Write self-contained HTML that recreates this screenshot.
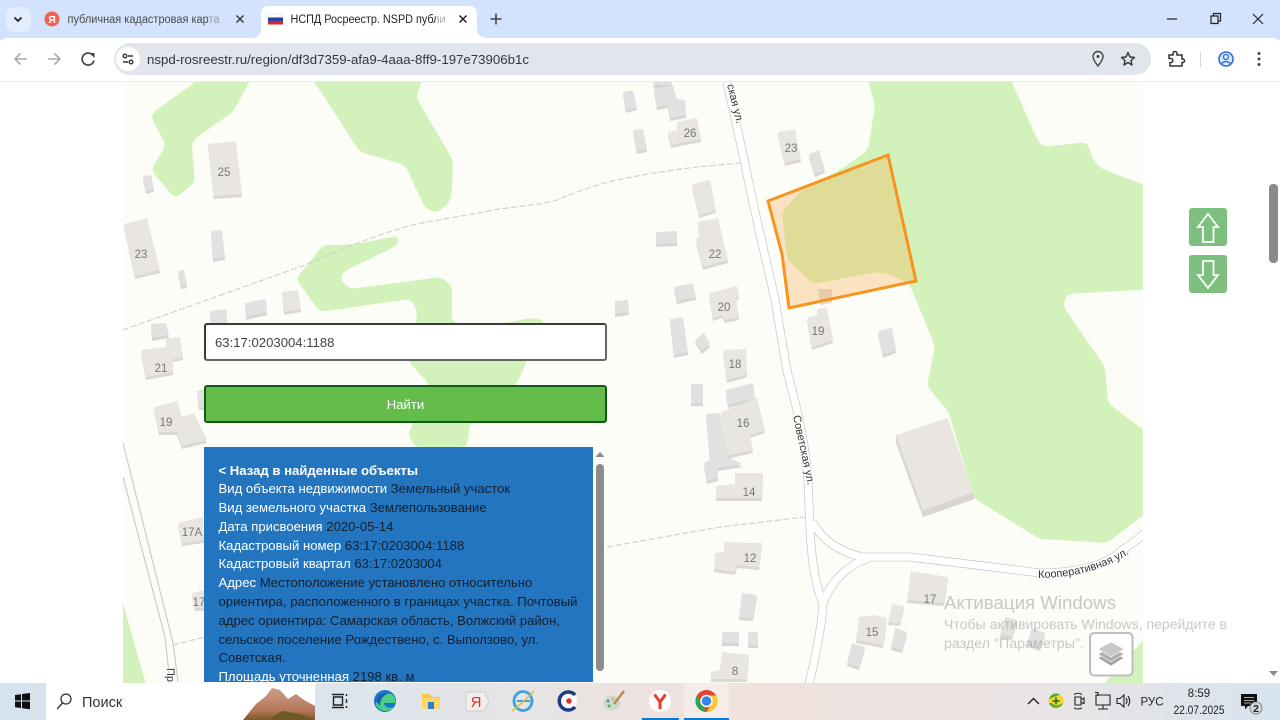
<!DOCTYPE html>
<html lang="ru"><head><meta charset="utf-8"><title>НСПД</title>
<style>
html,body{margin:0;padding:0;width:1280px;height:720px;overflow:hidden;background:#fff;font-family:"Liberation Sans","Noto Sans CJK SC",sans-serif}
svg{position:absolute;left:0;top:0}
.b{filter:drop-shadow(0 3px 0 #dbd8d2)}
.b polygon{fill:#e9e6e1}
.g{filter:drop-shadow(0 3px 0 #d6d6d3)}
.g polygon{fill:#e1e1e1}
.l{font-size:11.5px;fill:#777;text-anchor:middle}
.rd{fill:none;stroke:#c6c6c2;stroke-width:8.8;stroke-linejoin:round}
.rw{fill:none;stroke:#fff;stroke-width:7.4;stroke-linejoin:round}
.box{position:absolute;box-sizing:border-box}
#inp{left:204px;top:323px;width:403px;height:38px;background:#fff;border:2px solid #3a3a3a;border-bottom-color:#666;border-right-color:#666;border-radius:3px;font-size:13.13px;line-height:36px;padding-left:9px;color:#444}
#btn{left:204px;top:385px;width:403px;height:38px;background:#64bd4b;border:2px solid #0f5b14;border-radius:3px;font-size:13.13px;line-height:36px;color:#fff;text-align:center}
#pan{left:204px;top:447px;width:389px;height:235px;background:#2475c0;overflow:hidden;padding:14.5px 0 0 14.5px;font-size:13.13px;line-height:18.8px;color:#10202f;white-space:nowrap}
#pan span{color:#fff}
</style></head><body>
<svg width="1280" height="720" viewBox="0 0 1280 720" xmlns="http://www.w3.org/2000/svg">
<defs>
<clipPath id="mapc"><rect x="123" y="82" width="1020" height="601"/></clipPath>
<filter id="goo" filterUnits="userSpaceOnUse" x="0" y="0" width="1280" height="720" color-interpolation-filters="sRGB">
<feGaussianBlur stdDeviation="3.500"/><feComponentTransfer><feFuncA type="linear" slope="14" intercept="-6.500"/></feComponentTransfer>
</filter>
</defs>
<rect x="123" y="82" width="1020" height="601" fill="#fdfdf8"/>
<g clip-path="url(#mapc)">
<g fill="#d3f2bb" filter="url(#goo)">
<polygon points="262,60 233,112 193,140 192,149 195,182 175,199 151,170 166,145 150,115 195,82 205,60"/>
<polygon points="300,60 430,60 416,97 453,160 452,190 450,202 437,213 425,208 405,165 360,152"/>
<polygon points="400,235 398,245 343,272 340,280 350,289 440,277 452,285 452,323 503,323 532,318 546,320 516,385 470,423 467,447 415,447 408,435 413,423 430,385 407,360 416,324 417,309 410,299 320,312 296,279 323,245 340,245 363,243"/>
<polygon points="862,60 1002,60 1037,139 1043,147 1087,142 1093,159 1100,168 1170,195 1170,288 1067,294 1063,306 1105,367 1108,403 1170,450 1170,495 1107,543 1040,539 975,499 948,411 927,386 935,346 910,285 890,274 877,272 813,284 787,259 782,212 803,189 840,170 868,150 875,105"/>
<polygon points="115,575 152,705 100,705"/>
<polygon points="1170,610 1085,705 1170,705"/>
</g>
<!-- dashed paths -->
<g fill="none" stroke="#cfcfca" stroke-width="1.100" stroke-dasharray="6 2.500">
<path d="M123,330 L305,265 C340,250 380,233 413,225 C440,219 470,215 493,210 C520,206 540,205 557,200 C580,190 600,184 617,180 C650,173 680,169 697,167 L740,163"/>
<path d="M607,547 L720,527 L805,517"/>
<path d="M173,645 L205,637"/>
</g>
<!-- left road -->
<path d="M123,443 L173,643 L178,682 M123,477 L165,637 L170,682" fill="none" stroke="#c4c4c0" stroke-width="1"/>
<!-- roads -->
<path class="rd" d="M727,82 L745,164 C752,200 760,235 775,299 C780,330 784,355 788,375 C795,400 805,440 808,480 L810,527 C811,555 815,585 823,603 C822,625 815,660 809,684"/>
<path class="rd" d="M812,522 C822,540 840,552 862,557 L910,557 L1000,568 L1040,573 C1070,573 1095,568 1112,558 L1150,530"/>
<path class="rd" d="M868,558 Q836,570 823,603"/>
<path class="rw" d="M727,82 L745,164 C752,200 760,235 775,299 C780,330 784,355 788,375 C795,400 805,440 808,480 L810,527 C811,555 815,585 823,603 C822,625 815,660 809,684"/>
<path class="rw" d="M812,522 C822,540 840,552 862,557 L910,557 L1000,568 L1040,573 C1070,573 1095,568 1112,558 L1150,530"/>
<path class="rw" d="M868,558 Q836,570 823,603"/>
</g>
<!-- gray buildings -->
<g class="g">
<polygon points="143,176 151,175 154,189 146,191"/><polygon points="211,231 222,230 225,257 213,259"/>
<polygon points="178,271 184,270 187,285 181,286"/><polygon points="210,311 226,309 228,325 211,325"/>
<polygon points="245,303 266,299 267,312 246,317"/><polygon points="151,324 166,323 169,335 152,338"/>
<polygon points="197,391 205,389 205,407 199,407"/>
<polygon points="623,92 633,90 637,107 626,110"/><polygon points="654,89 673,85 677,99 685,100 686,115 670,118 668,105 657,107"/>
<polygon points="653,82 672,82 672,85 654,85"/><polygon points="633,130 643,129 647,149 637,151"/>
<polygon points="809,154 819,150 825,170 815,174"/><polygon points="656,232 677,231 677,243 656,244"/>
<polygon points="674,287 693,283 696,297 677,301"/><polygon points="615,301 628,300 629,312 615,314"/>
<polygon points="878,331 892,328 896,350 883,355"/><polygon points="670,319 683,317 688,352 674,355"/>
<polygon points="695,340 704,333 710,344 702,351"/><polygon points="691,384 703,384 703,403 691,403"/>
<polygon points="726,390 753,383 755,398 728,405"/>
<polygon points="706,414 720,413 727,457 743,464 718,468 718,478 707,481 704,463 710,460"/>
<polygon points="742,593 757,595 753,618 739,617"/><polygon points="722,632 739,632 739,643 722,643"/>
<polygon points="748,632 758,632 758,645 748,645"/><polygon points="895,628 907,632 902,650 891,647"/>
<polygon points="852,643 865,647 859,667 847,663"/><polygon points="1005,617 1017,620 1012,637 1000,635"/>
<polygon points="1032,628 1045,633 1040,648 1027,643"/>
</g>
<!-- beige buildings -->
<g class="b">
<polygon points="208,144 236,141 242,194 214,196"/><polygon points="124,224 147,218 160,270 135,276"/>
<polygon points="282,292 298,290 301,309 284,312"/>
<polygon points="166,339 180,337 183,357 173,359 173,372 146,377 141,350 166,347"/>
<polygon points="154,407 177,401 182,417 194,413 207,440 182,446 177,432 159,432"/>
<polygon points="178,523 203,517 204,540 182,543"/><polygon points="192,593 204,590 204,608 195,608"/>
<polygon points="677,122 697,118 701,139 671,145 668,132 678,130"/><polygon points="778,132 795,129 801,159 785,163"/>
<polygon points="692,184 710,180 716,210 699,215"/><polygon points="698,222 718,218 728,260 703,267 696,239 699,236"/>
<polygon points="709,293 737,286 739,295 736,299 739,317 725,320 722,315 713,318"/>
<polygon points="817,309 827,308 833,340 812,347 807,318 817,315"/>
<polygon points="723,350 746,349 747,374 738,377 727,380"/>
<polygon points="721,412 757,398 765,430 750,435 753,450 727,456"/>
<polygon points="735,473 763,473 762,498 716,498 716,486 735,484"/>
<polygon points="724,542 762,543 759,567 737,565 735,572 714,569 715,553 724,552"/>
<polygon points="722,652 749,655 747,679 711,679 711,672 720,670"/>
<polygon points="911,571 948,577 944,603 907,600"/><polygon points="892,604 904,606 900,623 888,622"/>
<polygon points="859,617 875,615 887,618 883,645 856,640"/>
</g>
<polygon points="896,435 896,443 923,517 975,499 973,492 923,510" fill="#d9d6d0"/>
<polygon points="896,435 948,418 973,492 923,510" fill="#e9e6e1"/>
<polygon points="818,289 832,289 832,303 820,305" fill="#e3dcd0"/>
<!-- labels -->
<g class="l">
<text x="224" y="176">25</text><text x="141" y="258">23</text><text x="161" y="372">21</text><text x="166" y="426">19</text>
<text x="192" y="536">17А</text><text x="199" y="606">17</text><text x="690" y="137">26</text><text x="791" y="152">23</text>
<text x="715" y="258">22</text><text x="724" y="311">20</text><text x="818" y="335">19</text><text x="735" y="368">18</text>
<text x="743" y="427">16</text><text x="749" y="496">14</text><text x="750" y="562">12</text><text x="735" y="675">8</text>
<text x="930" y="603">17</text><text x="872" y="636">15</text>
</g>
<g font-size="11" fill="#333" stroke="#fff" stroke-width="2" paint-order="stroke">
<text transform="translate(727,85) rotate(76)">ская ул.</text>
<text transform="translate(793,416) rotate(78)">Советская ул.</text>
<text transform="translate(167,668) rotate(90)">Пр</text>
<defs><path id="kp" d="M1038,578 Q1092,578 1132,552"/></defs>
<text><textPath href="#kp">Кооперативная ул.</textPath></text>
</g>
<!-- parcel -->
<polygon points="768,201 888,155 916,281 789,308 782,254" fill="rgba(250,170,70,.3)" stroke="#f7941d" stroke-width="3" stroke-linejoin="miter"/>
<!-- watermark -->
<g fill="#9a9a9a" fill-opacity=".55">
<text x="944" y="609" font-size="18" textLength="172" lengthAdjust="spacingAndGlyphs">Активация Windows</text>
<text x="944" y="629" font-size="13.500" textLength="283" lengthAdjust="spacingAndGlyphs">Чтобы активировать Windows, перейдите в</text>
<text x="944" y="648" font-size="13.500" textLength="140" lengthAdjust="spacingAndGlyphs">раздел "Параметры".</text>
</g>
<!-- layers button -->
<rect x="1090" y="633" width="42.500" height="42.500" rx="4" fill="#fff" stroke="#bdbdbd" stroke-width="2"/>
<g stroke="#fff" stroke-width=".6">
<polygon points="1111,651 1124,658 1111,666 1098,658" fill="#a0a0a0"/>
<polygon points="1111,647 1124,654 1111,662 1098,654" fill="#b0b0b0"/>
<polygon points="1111,642 1124,649 1111,657 1098,649" fill="#c8c8c8"/>
</g>
<!-- arrow buttons -->
<rect x="1189" y="208" width="38" height="38" rx="3" fill="#7dbf7e"/>
<rect x="1189" y="255" width="38" height="38" rx="3" fill="#7dbf7e"/>
<path d="M1208,214 L1218,227 L1213.500,227 L1213.500,242 L1203,242 L1203,227 L1198,227 Z" fill="none" stroke="#fff" stroke-width="1.800"/>
<path d="M1208,288 L1218,275 L1213.500,275 L1213.500,261 L1203,261 L1203,275 L1198,275 Z" fill="none" stroke="#fff" stroke-width="1.800"/>
<!-- page scrollbar -->
<rect x="1269" y="184" width="9" height="79" rx="4" fill="#8a8a8a"/>
<polygon points="1269,671 1278,671 1273.500,676" fill="#8a8a8a"/>
<!-- panel scrollbar -->
<rect x="593" y="447" width="14" height="235" fill="#fdfdf8"/>
<polygon points="600,452 604.500,457 595.500,457" fill="#8a8a8a"/>
<rect x="596" y="464" width="8" height="207" rx="4" fill="#8b8b8b"/>

<!-- tab strip -->
<rect x="0" y="0" width="1280" height="40" fill="#d3e3fd"/>
<rect x="6" y="7" width="25" height="25" rx="8" fill="#e3edfd"/>
<path d="M14.500,17.500 L18,21 L21.500,17.500" fill="none" stroke="#222" stroke-width="1.800"/>
<circle cx="52" cy="19" r="7.500" fill="#f0624e"/><text x="52" y="23" font-size="10.500" fill="#fff" text-anchor="middle" font-weight="bold">Я</text>
<text x="67.500" y="23" font-size="11.500" fill="#4a4a4a" textLength="152" lengthAdjust="spacingAndGlyphs">публичная кадастровая карта</text>
<rect x="208" y="8" width="14" height="22" fill="#d3e3fd" fill-opacity=".55"/>
<path d="M236.500,15.500 L243.500,22.500 M243.500,15.500 L236.500,22.500" stroke="#333" stroke-width="1.400"/>
<path d="M251,38 Q261,38 261,28 L261,14 Q261,6 269,6 L469,6 Q477,6 477,14 L477,28 Q477,38 487,38 Z" fill="#fff"/>
<rect x="268" y="14" width="15" height="3.600" fill="#fff" stroke="#ddd" stroke-width=".5"/><rect x="268" y="17.500" width="15" height="3.500" fill="#2a3f9e"/><rect x="268" y="21" width="15" height="3.500" fill="#d8232a"/>
<text x="290.500" y="23" font-size="11.500" fill="#222" textLength="155" lengthAdjust="spacingAndGlyphs">НСПД Росреестр. NSPD публи</text>
<rect x="436" y="8" width="12" height="22" fill="#fff" fill-opacity=".6"/>
<path d="M459.500,15.500 L466.500,22.500 M466.500,15.500 L459.500,22.500" stroke="#222" stroke-width="1.500"/>
<path d="M496,13.500 V24.500 M490.500,19 H501.500" stroke="#444" stroke-width="1.600"/>
<path d="M1167,19 H1177" stroke="#222" stroke-width="1.200"/>
<path d="M1211,16 H1218 V23.500 H1211 Z M1213.500,16 V13.500 H1220.500 V21 H1218" fill="none" stroke="#222" stroke-width="1.200"/>
<path d="M1253,14 L1263,24 M1263,14 L1253,24" stroke="#222" stroke-width="1.200"/>
<!-- toolbar -->
<path d="M0,46 Q0,38 8,38 L1272,38 Q1280,38 1280,46 L1280,81 L0,81 Z" fill="#fff"/>
<rect x="0" y="81" width="1280" height="1" fill="#ebebeb"/>
<g fill="none" stroke="#a8a8a8" stroke-width="1.600">
<path d="M27,59 H15.500 M20.500,53.500 L15,59 L20.500,64.500"/>
<path d="M48,59 H59.500 M54.500,53.500 L60,59 L54.500,64.500"/>
</g>
<path d="M93,55.500 A6,6 0 1 0 94,60.500" fill="none" stroke="#444" stroke-width="1.700"/><polygon points="89.500,52.500 94.500,52.500 94.500,57.500" fill="#444" transform="translate(0,.5)"/>
<rect x="114" y="43" width="1037" height="32" rx="16" fill="#e1e5ec"/>
<circle cx="128" cy="59" r="12" fill="#fff"/>
<g fill="none" stroke="#333" stroke-width="1.400"><path d="M128,56 H133 M123,62 H128"/><circle cx="125" cy="56" r="1.800"/><circle cx="131" cy="62" r="1.800"/></g>
<text x="147" y="64" font-size="13" fill="#33373d" textLength="382" lengthAdjust="spacingAndGlyphs">nspd-rosreestr.ru/region/df3d7359-afa9-4aaa-8ff9-197e73906b1c</text>
<path d="M1098,66 C1094,61 1093,58.500 1093,56.500 A5,5 0 0 1 1103,56.500 C1103,58.500 1102,61 1098,66 Z" fill="none" stroke="#444" stroke-width="1.400"/><circle cx="1098" cy="56.500" r="1.500" fill="#444"/>
<path d="M1128,52.500 L1130,57 L1134.500,57.500 L1131,60.500 L1132,65 L1128,62.500 L1124,65 L1125,60.500 L1121.500,57.500 L1126,57 Z" fill="none" stroke="#333" stroke-width="1.400" stroke-linejoin="round"/>
<path d="M1169,55 H1173 V53.500 A2,2 0 0 1 1177,53.500 V55 H1182 V59 H1183.500 A2,2 0 0 1 1183.500,62.500 H1182 V66 H1170 V62.500 H1171.500 A2.200,2.200 0 0 0 1171.500,58.500 H1169 Z" fill="none" stroke="#333" stroke-width="1.500"/>
<rect x="1200" y="52" width="1" height="15" fill="#d5dbe5"/>
<circle cx="1226" cy="59" r="7" fill="#d8e5fb" stroke="#2f6fd0" stroke-width="1.600"/><circle cx="1226" cy="57" r="2.500" fill="none" stroke="#2f6fd0" stroke-width="1.300"/><path d="M1221.500,63.500 Q1226,59.500 1230.500,63.500" fill="none" stroke="#2f6fd0" stroke-width="1.300"/>
<g fill="#444"><circle cx="1259" cy="53.500" r="1.500"/><circle cx="1259" cy="59" r="1.500"/><circle cx="1259" cy="64.500" r="1.500"/></g>

<!-- taskbar -->
<defs>
<linearGradient id="tb" x1="0" x2="1" y1="0" y2="0"><stop offset="0" stop-color="#d6e2ee"/><stop offset=".28" stop-color="#dde5ec"/><stop offset=".56" stop-color="#f1e2dc"/><stop offset=".8" stop-color="#ebe4e4"/><stop offset="1" stop-color="#d8e4ef"/></linearGradient>
<linearGradient id="mt" x1="0" x2="0" y1="0" y2="1"><stop offset="0" stop-color="#cf9f86"/><stop offset=".7" stop-color="#b5755a"/><stop offset="1" stop-color="#7a5a2a"/></linearGradient>
<clipPath id="tbc"><rect x="46" y="683" width="269" height="37"/></clipPath>
</defs>
<rect x="0" y="683" width="1280" height="37" fill="url(#tb)"/>
<g fill="#111"><path d="M15,695 L21,694.200 V700.500 H15 Z M22,694 L30,693 V700.500 H22 Z M15,701.500 H21 V708 L15,707.200 Z M22,701.500 H30 V709.200 L22,708.200 Z"/></g>
<rect x="46" y="683" width="269" height="37" fill="#fff"/>
<g clip-path="url(#tbc)">
<polygon points="243,720 256,704 266,696 272,688 280,690 288,699 296,694 304,700 315,706 315,720" fill="url(#mt)"/>
<polygon points="268,720 282,711 300,714 315,720" fill="#6b5a28"/>
</g>
<circle cx="66" cy="699" r="5" fill="none" stroke="#333" stroke-width="1.300"/><path d="M62.500,703 L57,709" stroke="#333" stroke-width="1.300"/>
<text x="82" y="707" font-size="14.500" fill="#333">Поиск</text>
<path d="M332,694.500 H344 M332,707.500 H344 M333.500,697 V705 H342.500 V697 Z M346.500,694 V696 M346.500,699 V703 M346.500,706 V708" fill="none" stroke="#222" stroke-width="1.400"/>
<circle cx="385" cy="701" r="11" fill="#1877c9"/><path d="M376,705 C376,697 384,692 391,694 C395,696 396,700 395,703 L384,703 C384,707 389,709 394,707 C391,712 380,713 376,705 Z" fill="#4ccf8a"/><path d="M376,701 C378,695 384,692 390,693 C384,694 380,699 380,706 Z" fill="#1b5fa8"/>
<path d="M422,694 H430 L432,697 H440 V709 H422 Z" fill="#f5c84b"/><rect x="422" y="698" width="18" height="11" fill="#fbd868"/><rect x="428" y="702" width="6" height="7" fill="#2a7fc9"/>
<path d="M466,692 H484 L489,701 L484,711 H466 Z" fill="#f1efee" stroke="#ccc"/><text x="476" y="707" font-size="15" fill="#d8342c" text-anchor="middle">Я</text>
<ellipse cx="523" cy="701" rx="9" ry="9.500" fill="none" stroke="#3aa0de" stroke-width="2.800"/><path d="M517,701 H530" stroke="#3aa0de" stroke-width="2"/><path d="M512,711 Q522,704 534,691" fill="none" stroke="#e8b93a" stroke-width="1.500"/>
<circle cx="568" cy="701" r="9" fill="#fff"/><path d="M575,695 A9,9 0 1 0 575,707" fill="none" stroke="#1c3e7e" stroke-width="3.500"/><circle cx="569" cy="701" r="2.800" fill="#d8342c"/>
<ellipse cx="612" cy="703" rx="8.500" ry="7.500" fill="#cfd8d0"/><circle cx="608" cy="701" r="1.500" fill="#4a90d0"/><circle cx="613" cy="699" r="1.500" fill="#e8b93a"/><circle cx="609" cy="706" r="1.500" fill="#5db05d"/><path d="M614,704 L624,691" stroke="#b98a4a" stroke-width="2.500"/>
<circle cx="660" cy="701" r="11" fill="#fff"/><path d="M654.500,694.500 L660,702 L665.500,694.500 M660,702 V709" fill="none" stroke="#f03a2e" stroke-width="3"/>
<rect x="684" y="683" width="45" height="37" fill="#fff" fill-opacity=".35"/>
<circle cx="706.500" cy="701" r="11" fill="#e4432f"/>
<path d="M706.500,712 A11,11 0 0 1 697,695.500 L702,704 Z" fill="#2fa44f"/>
<path d="M706.500,712 A11,11 0 0 0 716,695.500 L706.500,695.500 L711,704 Z" fill="#f8c92c"/>
<circle cx="706.500" cy="701" r="5.500" fill="#3a82ec" stroke="#fff" stroke-width="1.500"/>
<rect x="642" y="718" width="37" height="2" fill="#0a78d4"/><rect x="684" y="718" width="45" height="2" fill="#0a78d4"/>
<path d="M1028,704 L1033.500,698.500 L1039,704" fill="none" stroke="#222" stroke-width="1.400"/>
<circle cx="1056" cy="701" r="7.500" fill="#f3d431"/><path d="M1049,703 A7.500,7.500 0 0 0 1063,703 L1059,705 Q1055,707 1052,703 Z M1049,699 A7.500,7.500 0 0 1 1060,694.500 L1054,697 Z" fill="#4bab3a"/><path d="M1056,697.500 V704.500 M1052.500,701 H1059.500" stroke="#1d6d1d" stroke-width="1.500"/>
<path d="M1075,697 H1081 V705 H1075 Z M1081,699.500 L1084,698 V703.500 L1081,702.500 M1074,694.500 Q1078,692 1082,694.500 M1074,708 Q1078,710 1082,708" fill="none" stroke="#222" stroke-width="1.100"/>
<path d="M1096,695 H1110 V705 H1096 Z M1098,696 V692.500 H1095 M1103,705 V709 M1098,709 H1108" fill="none" stroke="#222" stroke-width="1.100"/>
<path d="M1117,698.500 H1120 L1124,695 V707 L1120,703.500 H1117 Z M1126,698 Q1128,701 1126,704 M1128,696 Q1131.500,701 1128,706" fill="none" stroke="#222" stroke-width="1.100"/>
<text x="1152" y="705.500" font-size="11.500" fill="#222" text-anchor="middle">РУС</text>
<text x="1199" y="697" font-size="11.500" fill="#222" text-anchor="middle">8:59</text>
<text x="1199" y="714" font-size="12" fill="#222" text-anchor="middle" textLength="51" lengthAdjust="spacingAndGlyphs">22.07.2025</text>
<path d="M1241,694 H1257 V706 H1248 L1245,709.500 V706 H1241 Z" fill="#111"/><path d="M1244,697.500 H1254 M1244,700.500 H1254 M1244,703 H1251" stroke="#ddd" stroke-width=".8"/>
<circle cx="1256" cy="708" r="6" fill="#d4d8dc" stroke="#888"/><text x="1256" y="712" font-size="10.500" fill="#222" text-anchor="middle" font-weight="bold">2</text>
</svg>
<div class="box" id="inp">63:17:0203004:1188</div>
<div class="box" id="btn">Найти</div>
<div class="box" id="pan"><span><b>&lt; Назад в найденные объекты</b></span><br>
<span>Вид объекта недвижимости</span> Земельный участок<br>
<span>Вид земельного участка</span> Землепользование<br>
<span>Дата присвоения</span> 2020-05-14<br>
<span>Кадастровый номер</span> 63:17:0203004:1188<br>
<span>Кадастровый квартал</span> 63:17:0203004<br>
<span>Адрес</span> Местоположение установлено относительно<br>
ориентира, расположенного в границах участка. Почтовый<br>
адрес ориентира: Самарская область, Волжский район,<br>
сельское поселение Рождествено, с. Выползово, ул.<br>
Советская.<br>
<span>Площадь уточненная</span> 2198 кв. м</div>
</body></html>
